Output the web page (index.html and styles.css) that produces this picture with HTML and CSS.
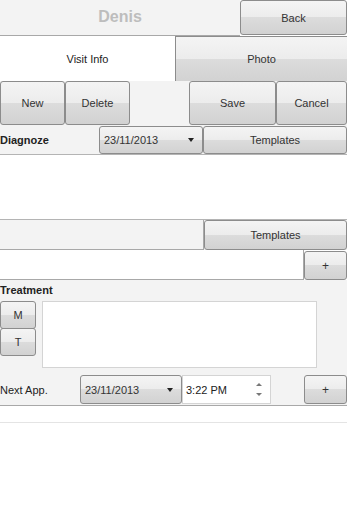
FILE: index.html
```html
<!DOCTYPE html>
<html lang="en">
<head>
  <meta charset="UTF-8" />
  <meta name="viewport" content="width=device-width, initial-scale=1" />
  <title>Visit</title>
  <link rel="stylesheet" href="styles.css">
</head>
<body>

  <div class="header">
    <div class="title">Denis</div>
    <button class="btn back-btn">Back</button>
  </div>

  <div class="tabs">
    <div class="tab active">Visit Info</div>
    <button class="btn tab">Photo</button>
  </div>

  <div class="toolbar">
    <button class="btn tool-new">New</button>
    <button class="btn tool-delete">Delete</button>
    <div class="spacer"></div>
    <button class="btn tool-save">Save</button>
    <button class="btn tool-cancel">Cancel</button>
  </div>

  <div class="row diag-row">
    <div class="label bold diag-label">Diagnoze</div>
    <div class="btn select diag-date">23/11/2013 <span class="arrow"></span></div>
    <button class="btn templates">Templates</button>
  </div>

  <div class="note"></div>

  <div class="row tpl-row">
    <div class="gray-box"></div>
    <button class="btn templates">Templates</button>
  </div>

  <div class="row add-row">
    <div class="text-input"></div>
    <button class="btn plus">+</button>
  </div>

  <div class="treatment">
    <div class="label bold">Treatment</div>
    <div class="treat-body">
      <div class="side-btns">
        <button class="btn small-btn">M</button>
        <button class="btn small-btn">T</button>
      </div>
      <div class="treat-text"></div>
    </div>
  </div>

  <div class="row next-row">
    <div class="label next-label">Next App.</div>
    <div class="btn select next-date">23/11/2013 <span class="arrow"></span></div>
    <div class="time-input">
      <span>3:22 PM</span>
      <span class="spin">
        <span class="up"></span>
        <span class="down"></span>
      </span>
    </div>
    <div class="spacer"></div>
    <button class="btn plus">+</button>
  </div>

  <div class="bottom"></div>

</body>
</html>
```

FILE: styles.css
```css
* {
  box-sizing: border-box;
}

body {
  margin: 0;
  width: 347px;
  font-family: "Liberation Sans", Arial, sans-serif;
  font-size: 11px;
  color: #222;
  background: white;
}

.btn {
  display: flex;
  align-items: center;
  justify-content: center;
  margin: 0;
  padding: 0;
  border: 1px solid #8c8c8c;
  border-radius: 3px;
  background: linear-gradient(#f4f4f4 0%, #ececec 50%, #dcdcdc 50%, #d2d2d2 100%);
  font-family: inherit;
  font-size: 11px;
  color: #333;
}

.bold {
  font-weight: bold;
}

/* entete */

.header {
  display: flex;
  height: 36px;
}

.title {
  width: 240px;
  height: 36px;
  background: #f3f3f3;
  border-bottom: 1px solid #a8a8a8;
  display: flex;
  align-items: center;
  justify-content: center;
  font-size: 16px;
  font-weight: bold;
  color: #bdbdbd;
  padding-bottom: 2px;
}

.back-btn {
  flex: 1;
  height: 35px;
}

/* onglets */

.tabs {
  display: flex;
  height: 45px;
}

.tab {
  display: flex;
  align-items: center;
  justify-content: center;
}

.tab.active {
  width: 175px;
  background: white;
}

.tabs .btn {
  flex: 1;
  border-radius: 0;
  border-right: none;
  border-bottom: none;
}

/* barre d'outils */

.toolbar {
  display: flex;
  height: 45px;
  background: #f3f3f3;
  padding-bottom: 1px;
}

.tool-new,
.tool-delete {
  width: 65px;
}

.spacer {
  flex: 1;
}

.tool-save {
  width: 87px;
}

.tool-cancel {
  flex: 0 0 71px;
}

/* lignes */

.row {
  display: flex;
  background: #f3f3f3;
}

.label {
  display: flex;
  align-items: center;
}

.diag-row {
  height: 29px;
  border-bottom: 1px solid #b4b4b4;
}

.diag-label {
  width: 99px;
}

.select {
  justify-content: space-between;
  padding: 0 8px 0 4px;
}

.arrow {
  width: 0;
  height: 0;
  border-left: 3px solid transparent;
  border-right: 3px solid transparent;
  border-top: 4px solid #222;
}

.diag-date {
  width: 104px;
}

.diag-row .templates,
.tpl-row .templates {
  flex: 1;
}

.note {
  height: 65px;
  background: white;
  border-bottom: 1px solid #b4b4b4;
}

.tpl-row {
  height: 30px;
}

.gray-box {
  width: 204px;
  border: 1px solid #a8a8a8;
  border-top: none;
  border-left: none;
  background: #f3f3f3;
}

.add-row {
  height: 30px;
  background: white;
}

.text-input {
  width: 304px;
  border-bottom: 1px solid #a8a8a8;
  border-right: 1px solid #a8a8a8;
}

.plus {
  flex: 1;
  height: 29px;
  margin-top: 1px;
  font-size: 12px;
}

/* traitement */

.treatment {
  background: #f3f3f3;
  padding: 3px 0 6px 0;
}

.treatment .label {
  height: 14px;
}

.treat-body {
  display: flex;
  gap: 6px;
  margin-top: 4px;
}

.side-btns {
  display: flex;
  flex-direction: column;
}

.small-btn {
  width: 36px;
  height: 28px;
  margin-bottom: -1px;
}

.treat-text {
  width: 275px;
  height: 67px;
  background: white;
  border: 1px solid #d4d4d4;
}

/* prochain rendez-vous */

.next-row {
  height: 32px;
  padding-top: 1px;
  border-bottom: 1px solid #a8a8a8;
}

.next-label {
  width: 80px;
}

.next-date {
  width: 102px;
  height: 29px;
}

.time-input {
  width: 89px;
  height: 29px;
  background: white;
  border: 1px solid #d4d4d4;
  display: flex;
  align-items: center;
  justify-content: space-between;
  padding: 0 8px 0 3px;
}

.spin {
  display: flex;
  flex-direction: column;
  gap: 7px;
}

.up {
  width: 0;
  height: 0;
  border-left: 3px solid transparent;
  border-right: 3px solid transparent;
  border-bottom: 3px solid #777;
}

.down {
  width: 0;
  height: 0;
  border-left: 3px solid transparent;
  border-right: 3px solid transparent;
  border-top: 3px solid #777;
}

.next-row .plus {
  height: 29px;
  margin-top: 0;
  flex: 0 0 43px;
}

.bottom {
  height: 17px;
  border-bottom: 1px solid #e4e4e4;
}
```
